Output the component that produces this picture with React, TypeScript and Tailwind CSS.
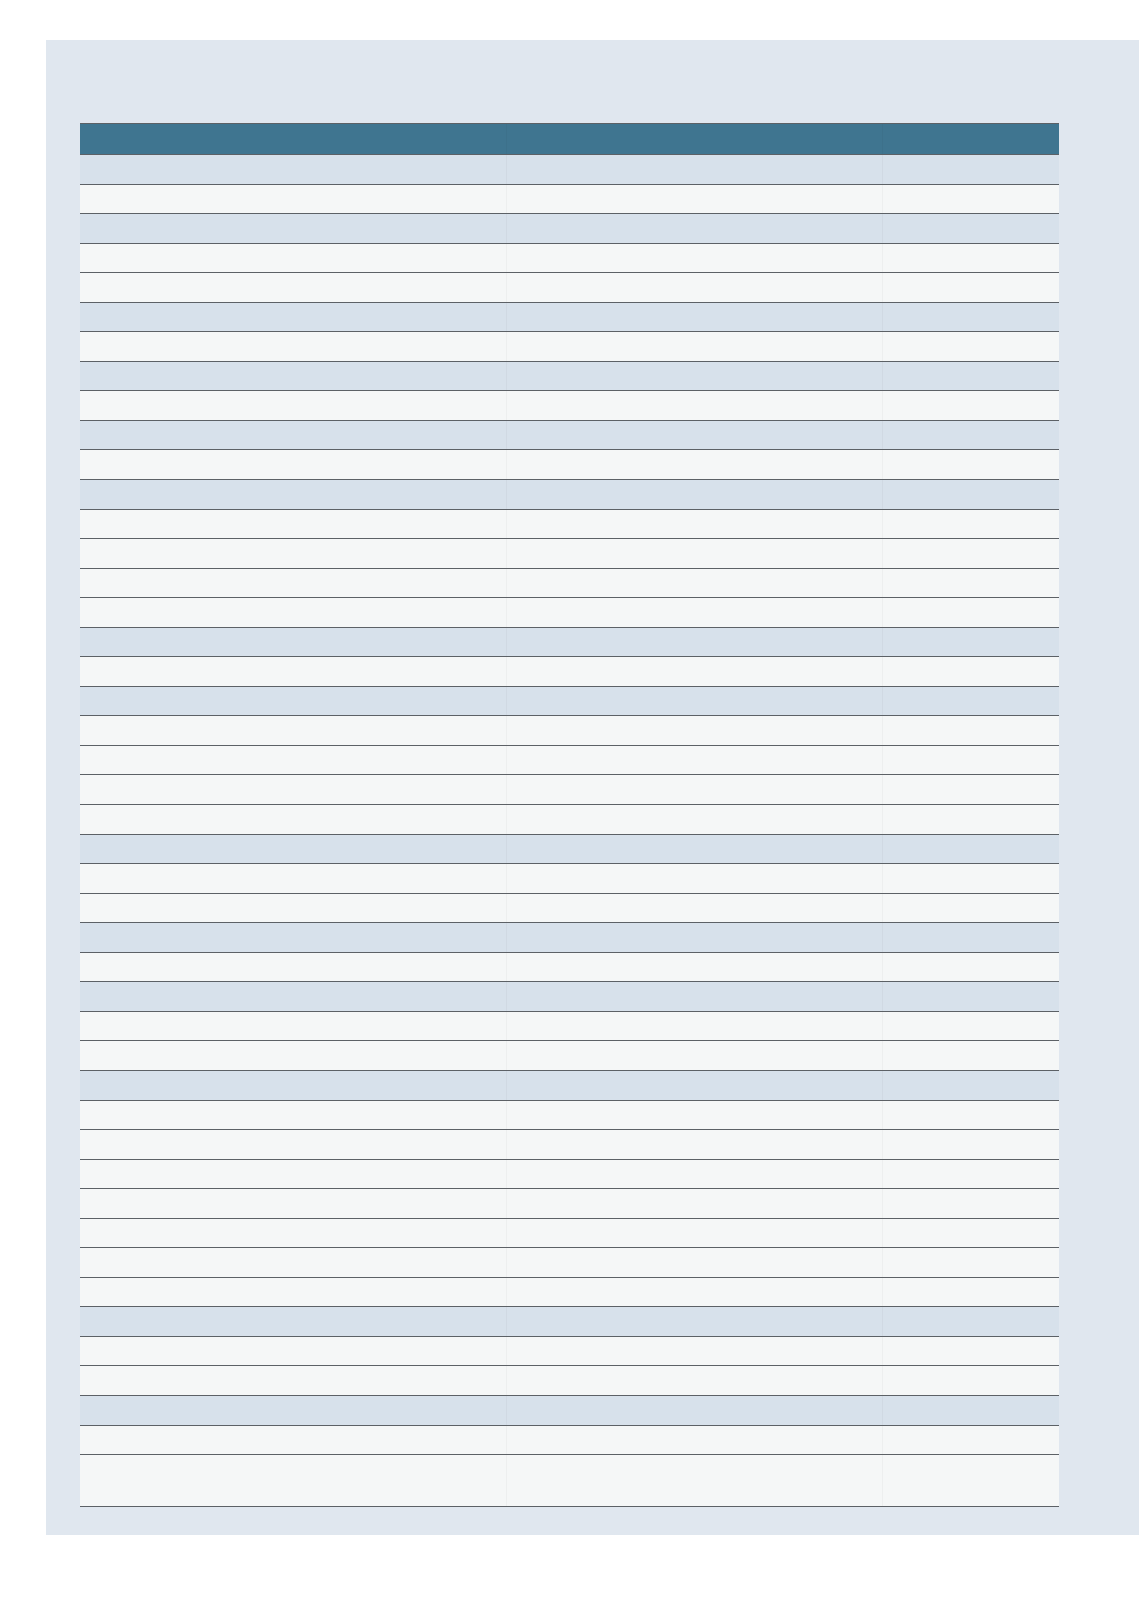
import React from "react";

const pattern = "BWBWWBWBWBWBWWWWBWBWWWWBWWBWBWWBWWWWWWWBWWBW";

function Row({ blue, tall }: { blue: boolean; tall?: boolean }) {
  return (
    <div
      className={`grid grid-cols-[427px_376px_1fr] border-b border-[#5c6166] ${
        blue ? "bg-[#d7e1eb]" : "bg-[#f5f7f7]"
      } ${tall ? "h-[52px]" : "h-[29.55px]"}`}
    >
      <div className="border-r border-black/[0.03]" />
      <div className="border-r border-black/[0.03]" />
      <div />
    </div>
  );
}

export default function App() {
  const rows = pattern.split("").map((c) => c === "B");
  return (
    <div className="min-h-[1611px] bg-white pt-[40px] pl-[46px] font-['Liberation_Sans',sans-serif]">
      <div className="bg-[#e0e7ef] pl-[34px] pr-[80px] pt-[83px] pb-[28px]">
        <div className="flex flex-col">
          <div className="grid h-[32px] grid-cols-[427px_376px_1fr] border-t border-b border-[#5c6166] bg-[#3f7590]">
            <div className="border-r border-black/[0.03]" />
            <div className="border-r border-black/[0.03]" />
            <div />
          </div>
          {rows.map((b, i) => (
            <Row key={i} blue={b} />
          ))}
          <Row blue={false} tall />
        </div>
      </div>
    </div>
  );
}
